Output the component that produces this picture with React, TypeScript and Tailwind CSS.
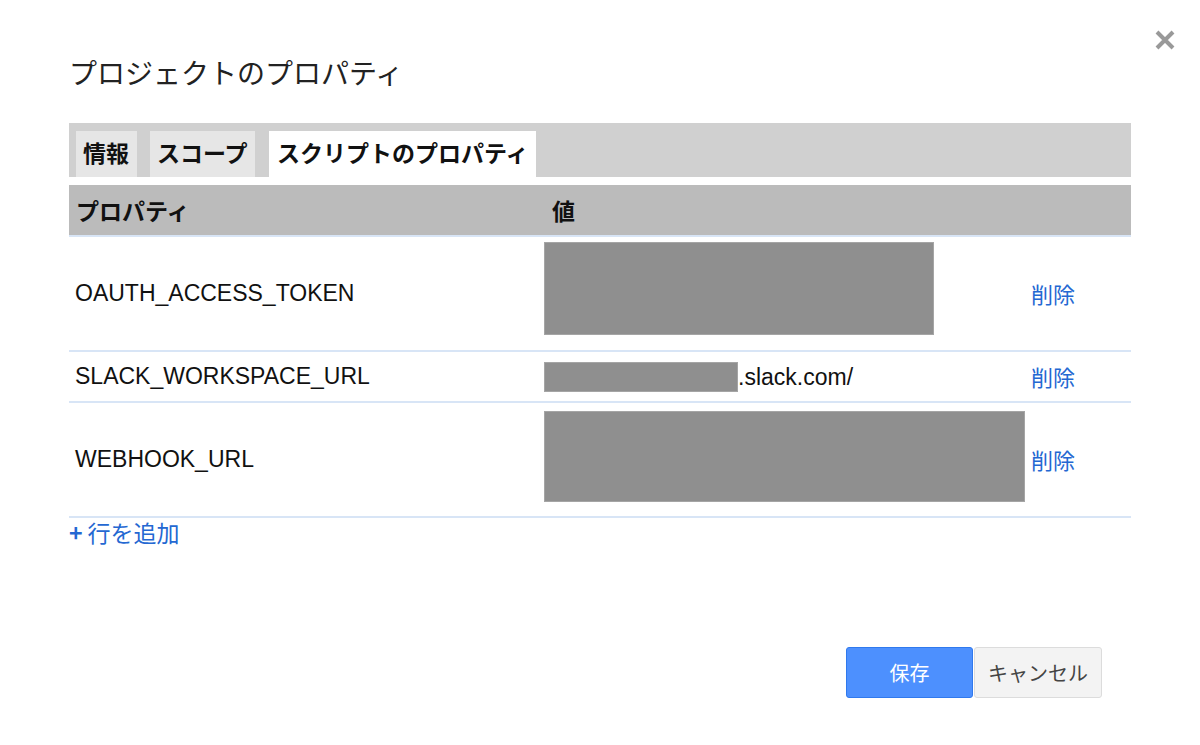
import React from "react";

const rows = [
  { key: "OAUTH_ACCESS_TOKEN", h: "h-[115px]", box: "mt-[5px] h-[93px] w-[390px]", suffix: "" },
  { key: "SLACK_WORKSPACE_URL", h: "h-[51px]", box: "mt-[10px] h-[30px] w-[194px]", suffix: ".slack.com/" },
  { key: "WEBHOOK_URL", h: "h-[115px]", box: "mt-[8px] h-[91px] w-[481px]", suffix: "" },
];

export default function App() {
  return (
    <div
      className="relative w-[1200px] h-[745px] bg-white text-[#222] px-[69px] overflow-hidden"
      style={{ fontFamily: '"Liberation Sans", "Noto Sans CJK JP", sans-serif' }}
    >
      <button className="absolute left-[1154px] top-[29px] w-[22px] h-[22px]" aria-label="close">
        <svg viewBox="0 0 22 22" width="22" height="22">
          <path d="M3 3 L19 19 M19 3 L3 19" stroke="#999" strokeWidth="4" strokeLinecap="butt" />
        </svg>
      </button>

      <div className="pt-[54px] h-[90px] text-[28px] leading-[36px] text-[#222]" style={{ fontFamily: '"Noto Sans CJK JP", sans-serif' }}>
        プロジェクトのプロパティ
      </div>

      <div className="mt-[33px] h-[54px] bg-[#d0d0d0] pt-[8px] pl-[7px] flex text-[23px] font-bold text-[#111]" style={{ fontFamily: '"Noto Sans CJK JP", sans-serif' }}>
        <div className="h-[46px] w-[61px] bg-[#e6e6e6] flex items-center pl-[7px] pb-[3px]">情報</div>
        <div className="ml-[13px] h-[46px] w-[105px] bg-[#e6e6e6] flex items-center pl-[7px] pb-[3px]">スコープ</div>
        <div className="ml-[14px] h-[46px] w-[267px] bg-white flex items-center pl-[8px] pb-[3px]">スクリプトのプロパティ</div>
      </div>

      <div className="mt-[8px] h-[50px] bg-[#bbbbbb] flex items-center text-[23px] font-bold text-[#111]" style={{ fontFamily: '"Noto Sans CJK JP", sans-serif' }}>
        <div className="w-[475px] pl-[7px]">プロパティ</div>
        <div className="pl-[8px]">値</div>
      </div>

      {rows.map((r) => (
        <div key={r.key} className={`border-t-2 border-[#d8e5f6] flex ${r.h}`}>
          <div className="w-[475px] pl-[6px] flex items-center text-[23px] text-[#111]">{r.key}</div>
          <div className="w-[487px] flex items-start">
            <div className={`${r.box} bg-[#8f8f8f] border border-[#a5a5a5]`} />
            {r.suffix && (
              <div className="mt-[10px] h-[30px] flex items-center text-[23px] text-[#111]">{r.suffix}</div>
            )}
          </div>
          <div className="flex items-center text-[22px] text-[#2468d2]" style={{ fontFamily: '"Noto Sans CJK JP", sans-serif' }}>
            削除
          </div>
        </div>
      ))}
      <div className="border-t-2 border-[#d8e5f6] h-[30px] flex items-center text-[23px] text-[#2468d2]" style={{ fontFamily: '"Noto Sans CJK JP", sans-serif' }}>
        <span className="font-bold mr-[5px]">+</span>行を追加
      </div>

      <div className="mt-[101px] flex justify-end pr-[29px]" style={{ fontFamily: '"Noto Sans CJK JP", sans-serif' }}>
        <button className="w-[127px] h-[51px] bg-[#4d90fe] border border-[#3079ed] rounded-[3px] text-white text-[20px]">保存</button>
        <button className="ml-[1px] w-[128px] h-[51px] bg-[#f3f3f3] border border-[#dcdcdc] rounded-[3px] text-[#444] text-[20px]">キャンセル</button>
      </div>
    </div>
  );
}
